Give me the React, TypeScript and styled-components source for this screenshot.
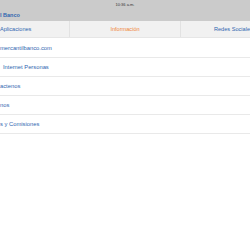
import React from 'react'
import styled, { createGlobalStyle } from 'styled-components';

const GlobalStyle = createGlobalStyle`
  html, body {
    margin: 0;
    padding: 0;
    background: #ffffff;
    overflow: hidden;
  }
  body {
    font-family: 'Liberation Sans', Arial, sans-serif;
  }
`;

const BLUE = '#2f66b0';
const ORANGE = '#f08436';

const Screen = styled.div`
  width: 250px;
  height: 250px;
  display: flex;
  flex-direction: column;
  background: #ffffff;
  overflow: hidden;
`;

const Header = styled.div`
  height: 21px;
  background: #cbcbcb;
  display: flex;
  flex-direction: column;
`;

const StatusBar = styled.div`
  height: 9px;
  display: flex;
  align-items: center;
  justify-content: center;
  font-size: 4px;
  color: #333333;
`;

const Title = styled.div`
  height: 12px;
  display: flex;
  align-items: center;
  font-size: 5.5px;
  font-weight: bold;
  color: ${BLUE};
  white-space: nowrap;
`;

const Tabs = styled.div`
  height: 16px;
  background: #f1f1f1;
  display: grid;
  grid-template-columns: 69px 1fr 70px;
  border-bottom: 1px solid #e6e6e6;
`;

const Tab = styled.div<{ $active?: boolean; $align: 'left' | 'center' | 'right' }>`
  display: flex;
  align-items: center;
  justify-content: ${p => p.$align === 'left' ? 'flex-start' : p.$align === 'right' ? 'flex-end' : 'center'};
  font-size: 5.6px;
  color: ${p => p.$active ? ORANGE : BLUE};
  white-space: nowrap;
  overflow: hidden;
  & + & {
    border-left: 1px solid #e2e2e2;
  }
`;

const List = styled.div`
  display: flex;
  flex-direction: column;
  padding-top: 1px;
`;

const Row = styled.div<{ $indent?: number }>`
  height: 18px;
  display: flex;
  align-items: center;
  padding-left: ${p => p.$indent || 0}px;
  font-size: 5.8px;
  color: ${BLUE};
  white-space: nowrap;
  border-bottom: 1.5px solid #e9e9e9;
`;

const rows = [
  { label: 'mercantilbanco.com', indent: 0 },
  { label: 'Internet Personas', indent: 3 },
  { label: 'actenos', indent: 0 },
  { label: 'nos', indent: 0 },
  { label: 's y Comisiones', indent: 0 },
];

function App() {
  return (
    <Screen>
      <GlobalStyle />
      <Header>
        <StatusBar>10:36 a.m.</StatusBar>
        <Title>l Banco</Title>
      </Header>
      <Tabs>
        <Tab $align="left">Aplicaciones</Tab>
        <Tab $align="center" $active>Información</Tab>
        <Tab $align="right">Redes Sociale</Tab>
      </Tabs>
      <List>
        {rows.map(r => (
          <Row key={r.label} $indent={r.indent}>{r.label}</Row>
        ))}
      </List>
    </Screen>
  );
}

export default App
